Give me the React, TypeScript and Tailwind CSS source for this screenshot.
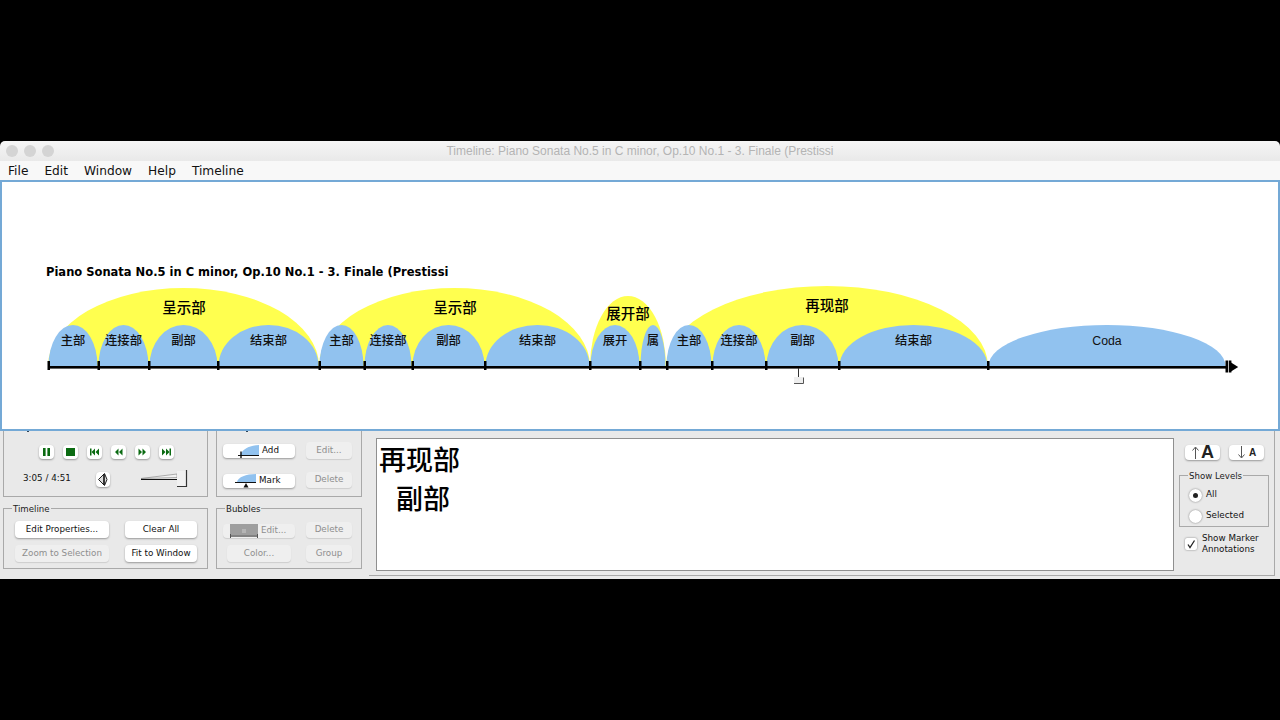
import React from "react";

const UI = "font-['DejaVu_Sans','Noto_Sans_CJK_SC',sans-serif]";
const BLUE = "#91c2ef";
const YELLOW = "#ffff4f";
const big = [
  { a: 48, b: 319, top: 288, label: "呈示部", x: 184, y: 313 },
  { a: 319, b: 590, top: 288, label: "呈示部", x: 455, y: 313 },
  { a: 590, b: 666, top: 296, label: "展开部", x: 628, y: 319 },
  { a: 666, b: 988, top: 286, label: "再现部", x: 827, y: 311 },
];
const small = [
  { a: 48, b: 98, label: "主部" },
  { a: 98, b: 149, label: "连接部" },
  { a: 149, b: 218, label: "副部" },
  { a: 218, b: 319, label: "结束部" },
  { a: 319, b: 364, label: "主部" },
  { a: 364, b: 412, label: "连接部" },
  { a: 412, b: 485, label: "副部" },
  { a: 485, b: 590, label: "结束部" },
  { a: 590, b: 640, label: "展开" },
  { a: 640, b: 666, label: "属" },
  { a: 666, b: 712, label: "主部" },
  { a: 712, b: 766, label: "连接部" },
  { a: 766, b: 839, label: "副部" },
  { a: 839, b: 988, label: "结束部" },
  { a: 988, b: 1226, label: "Coda" },
];
const ticks = [48.5, 98.5, 149, 218, 319.5, 364.5, 412.5, 485, 590, 640, 667, 712, 766, 839, 988];

function arc(a: number, b: number, top: number) {
  const rx = (b - a) / 2;
  const ry = 366 - top;
  return `M${a} 366 A${rx} ${ry} 0 0 1 ${b} 366 Z`;
}

function Diagram() {
  return (
    <svg viewBox="2 182 1276 247" className="block h-full w-full">
      <text x="46" y="276" fontSize="11.5" fontWeight="700" fontFamily="'DejaVu Sans',sans-serif" fill="#000">
        Piano Sonata No.5 in C minor, Op.10 No.1 - 3. Finale (Prestissi
      </text>
      {big.map((s, i) => (
        <path key={i} d={arc(s.a, s.b, s.top)} fill={YELLOW} />
      ))}
      {small.map((s, i) => (
        <path key={i} d={arc(s.a + 0.5, s.b - 0.5, 325)} fill={BLUE} />
      ))}
      {big.map((s, i) => (
        <text key={i} x={s.x} y={s.y} textAnchor="middle" fontSize="14.5" fontWeight="500" fontFamily="'Noto Sans CJK SC',sans-serif" fill="#000">
          {s.label}
        </text>
      ))}
      {small.map((s, i) => (
        <text
          key={i}
          x={(s.a + s.b) / 2}
          y="345"
          textAnchor="middle"
          fontSize="12.3"
          fontFamily="'Liberation Sans','Noto Sans CJK SC',sans-serif"
          fontWeight="500"
          fill="#111"
        >
          {s.label}
        </text>
      ))}
      <rect x="48" y="368" width="1180" height="1" fill="#aaa" />
      <rect x="48" y="366" width="1180" height="2.4" fill="#000" />
      {ticks.map((t) => (
        <rect key={t} x={t - 1} y="361" width="2.5" height="9" fill="#000" />
      ))}
      <rect x="1225.5" y="360.5" width="2.6" height="12" fill="#000" />
      <rect x="1228.8" y="360.5" width="2.6" height="12" fill="#000" />
      <path d="M1231 362.5 L1238.2 367 L1231 371.5 Z" fill="#000" />
      <rect x="798" y="368" width="1" height="9" fill="#333" />
      <rect x="794" y="377" width="9" height="6" fill="#eee" />
      <path d="M794 383.5 H803.5 V377.5" fill="none" stroke="#555" strokeWidth="1" />
    </svg>
  );
}

function Btn({ className = "", disabled = false, children }: { className?: string; disabled?: boolean; children?: React.ReactNode }) {
  return (
    <div
      className={`flex items-center rounded-[4px] whitespace-nowrap text-[8.75px] ${
        disabled ? "bg-[#efefef] text-[#8e8e8e] shadow-[0_1px_1px_rgba(0,0,0,0.12)]" : "bg-white text-[#111] shadow-[0_1px_2px_rgba(0,0,0,0.35)]"
      } ${className.includes("justify-start") ? "" : "justify-center"} ${className}`}
    >
      {children}
    </div>
  );
}

function Box({ legend, className = "", children }: { legend?: string; className?: string; children?: React.ReactNode }) {
  return (
    <div className={`relative border border-[#a9a9a9] ${className}`}>
      {legend && (
        <span className="absolute left-[8px] top-[-5px] bg-[#e9e9e9] px-[1px] text-[8.6px] leading-[10px] text-[#222]">{legend}</span>
      )}
      {children}
    </div>
  );
}

const G = "#0b6b12";
function Transport({ d, rects }: { d?: string; rects?: number[][] }) {
  return (
    <Btn className="h-[14px] w-[15px]">
      <svg viewBox="0 0 15 14" className="h-[14px] w-[15px]">
        {rects?.map((r, i) => <rect key={i} x={r[0]} y={r[1]} width={r[2]} height={r[3]} fill={G} />)}
        {d && <path d={d} fill={G} />}
      </svg>
    </Btn>
  );
}

function AddIcon() {
  return (
    <svg viewBox="0 0 24 14" className="h-[14px] w-[24px] shrink-0">
      <path d="M3 11 C6 5 12 1.5 22 1 V11 Z" fill={BLUE} />
      <path d="M1 11.5 H22" stroke="#111" strokeWidth="1" />
      <path d="M4 7.5 V14" stroke="#111" strokeWidth="1.4" />
    </svg>
  );
}
function MarkIcon() {
  return (
    <svg viewBox="0 0 24 16" className="h-[16px] w-[24px] shrink-0">
      <path d="M3 9 C4 4 12 1 22 1 V9 Z" fill={BLUE} />
      <path d="M1 9.5 H22" stroke="#111" strokeWidth="1" />
      <path d="M12 10 L9.5 14.5 H14.5 Z" fill="#111" />
    </svg>
  );
}

function Radio({ checked, label }: { checked?: boolean; label: string }) {
  return (
    <div className="flex h-[14px] items-center gap-[4px]">
      <div className="flex h-[13px] w-[13px] items-center justify-center rounded-full bg-white shadow-[0_0_2px_rgba(0,0,0,0.5)]">
        {checked && <div className="h-[5px] w-[5px] rounded-full bg-[#222]" />}
      </div>
      <span className="text-[8.75px] text-[#111]">{label}</span>
    </div>
  );
}

export default function App() {
  return (
    <div className={`flex h-[720px] w-[1280px] flex-col overflow-hidden bg-black pt-[141px] ${UI}`}>
      <div className="relative flex h-[20px] shrink-0 items-center justify-center rounded-t-[5px] bg-gradient-to-b from-[#f6f6f6] to-[#e9e9e9] font-['Liberation_Sans',sans-serif] text-[12px] text-[#b4b4b4]">
        <div className="absolute left-[6px] top-[4px] flex gap-[6px]">
          <div className="h-[12px] w-[12px] rounded-full bg-[#d4d4d4]" />
          <div className="h-[12px] w-[12px] rounded-full bg-[#d4d4d4]" />
          <div className="h-[12px] w-[12px] rounded-full bg-[#d4d4d4]" />
        </div>
        Timeline: Piano Sonata No.5 in C minor, Op.10 No.1 - 3. Finale (Prestissi
      </div>
      <div className="flex h-[19px] shrink-0 items-center gap-[16px] bg-[#f8f8f8] pl-[8px] pt-[1px] text-[12.2px] text-[#111]">
        <span>File</span>
        <span>Edit</span>
        <span>Window</span>
        <span>Help</span>
        <span>Timeline</span>
      </div>
      <div className="relative z-10 h-[251px] shrink-0 border-2 border-[#74a9d6] bg-white">
        <Diagram />
      </div>

      <div className="relative flex h-[148px] shrink-0 overflow-hidden bg-[#e9e9e9] pl-[3px]">
        <div className="absolute left-[27px] top-0 h-[1px] w-[2px] bg-[#345]" />
        <div className="absolute left-[246px] top-0 h-[1px] w-[2px] bg-[#345]" />
        <div className="flex w-[205px] shrink-0 flex-col">
          <Box className="mt-[-6px] h-[72px]">
            <div className="flex gap-[9px] pl-[35px] pt-[19px]">
              <Transport rects={[[4, 3, 2.6, 8], [8.4, 3, 2.6, 8]]} />
              <Transport rects={[[3, 3, 9, 8]]} />
              <Transport rects={[[3, 3.5, 1.5, 7]]} d="M8 3.5 V10.5 L4.5 7 Z M12 3.5 V10.5 L8.5 7 Z" />
              <Transport d="M7.5 3.5 V10.5 L4 7 Z M11.5 3.5 V10.5 L8 7 Z" />
              <Transport d="M3.5 3.5 V10.5 L7 7 Z M7.5 3.5 V10.5 L11 7 Z" />
              <Transport rects={[[10.5, 3.5, 1.5, 7]]} d="M3 3.5 V10.5 L6.5 7 Z M7 3.5 V10.5 L10.5 7 Z" />
            </div>
            <div className="flex items-center pl-[19px] pt-[10px]">
              <span className="w-[73px] text-[8.75px] text-[#111]">3:05 / 4:51</span>
              <Btn className="h-[15px] w-[14px]">
                <svg viewBox="0 0 14 15" className="h-[15px] w-[14px]">
                  <path d="M2.5 7.5 L8.5 1.5 L11 7.5 L8.5 13.5 Z" fill="#ddd" stroke="#222" strokeWidth="1" />
                  <path d="M8 2 V13" stroke="#111" strokeWidth="1.6" />
                </svg>
              </Btn>
              <svg viewBox="0 0 48 20" className="ml-[31px] h-[20px] w-[48px]">
                <path d="M0 9.5 L36 5 V8.5 Z" fill="#f2f2f2" stroke="#666" strokeWidth="0.5" />
                <path d="M0 10.5 H36" stroke="#111" strokeWidth="1.2" />
                <rect x="36" y="2" width="9" height="15" fill="#f1f1f1" />
                <path d="M36 17.5 H45.5 V1" fill="none" stroke="#333" strokeWidth="1.2" />
              </svg>
            </div>
          </Box>
          <Box legend="Timeline" className="mt-[11px] h-[61px]">
            <div className="grid grid-cols-[94px_72px] grid-rows-[17px_17px] gap-x-[16px] gap-y-[7px] pl-[11px] pt-[12px]">
              <Btn>Edit Properties...</Btn>
              <Btn>Clear All</Btn>
              <Btn disabled>Zoom to Selection</Btn>
              <Btn>Fit to Window</Btn>
            </div>
          </Box>
        </div>

        <div className="ml-[8px] flex w-[146px] shrink-0 flex-col">
          <Box className="mt-[-6px] h-[72px]">
            <div className="grid grid-cols-[72px_46px] grid-rows-[17px_16px] gap-x-[11px] gap-y-[13px] pl-[6px] pt-[16px]">
              <div className="flex items-start pt-[2px]">
                <Btn className="h-[14px] w-[72px] justify-start gap-[1px] pl-[14px]"><AddIcon /><span>Add</span></Btn>
              </div>
              <Btn disabled>Edit...</Btn>
              <div className="flex items-end">
                <Btn className="h-[14px] w-[72px] justify-start gap-[1px] pl-[11px]"><MarkIcon /><span>Mark</span></Btn>
              </div>
              <Btn disabled>Delete</Btn>
            </div>
          </Box>
          <Box legend="Bubbles" className="mt-[11px] h-[61px]">
            <div className="grid grid-cols-[72px_46px] grid-rows-[16px_17px] gap-x-[11px] gap-y-[7px] pl-[6px] pt-[13px]">
              <Btn disabled className="h-[14px] justify-start gap-[3px] self-end pl-[7px]">
                <svg viewBox="0 0 28 14" className="h-[14px] w-[28px] shrink-0">
                  <rect width="28" height="13" fill="#9e9e9e" />
                  <rect x="12" y="5" width="4" height="4" fill="#b5b5b5" />
                  <path d="M0 12 H28" stroke="#666" />
                  <path d="M0.5 10 V14 M27.5 10 V14" stroke="#555" />
                </svg>
                Edit...
              </Btn>
              <Btn disabled>Delete</Btn>
              <Btn disabled className="mx-[4px]">Color...</Btn>
              <Btn disabled>Group</Btn>
            </div>
          </Box>
        </div>

        <div className="ml-[7px] flex h-[145px] w-[906px] shrink-0 border-b border-r border-[#a9a9a9] pl-[7px]">
          <div className="mt-[7px] h-[133px] w-[798px] shrink-0 border border-[#8f8f8f] bg-white pl-[2px] font-['Noto_Sans_CJK_SC','Liberation_Sans',sans-serif] text-[27px] font-medium leading-[39px] text-black">
            <div>再现部</div>
            <div className="pl-[17px]">副部</div>
          </div>

          <div className="ml-[5px] flex w-[91px] shrink-0 flex-col">
            <div className="mt-[14px] flex gap-[9px] pl-[6px]">
              <Btn className="h-[15px] w-[35px] gap-[1px] font-['Liberation_Sans',sans-serif]">
                <svg viewBox="0 0 9 13" className="h-[13px] w-[9px]">
                  <path d="M4.5 13 V1.5 M1.5 4.5 L4.5 1 L7.5 4.5" fill="none" stroke="#555" strokeWidth="1" />
                </svg>
                <span className="text-[18px] font-bold leading-[15px] text-[#222]">A</span>
              </Btn>
              <Btn className="h-[15px] w-[35px] gap-[3px] font-['Liberation_Sans',sans-serif]">
                <svg viewBox="0 0 9 13" className="h-[13px] w-[9px]">
                  <path d="M4.5 0 V11.5 M1.5 8.5 L4.5 12 L7.5 8.5" fill="none" stroke="#555" strokeWidth="1" />
                </svg>
                <span className="text-[10px] font-bold leading-[15px] text-[#222]">A</span>
              </Btn>
            </div>
            <Box legend="Show Levels" className="mt-[15px] h-[52px] w-[90px]">
              <div className="flex flex-col gap-[7px] pl-[9px] pt-[12px]">
                <Radio checked label="All" />
                <Radio label="Selected" />
              </div>
            </Box>
            <div className="ml-[6px] mt-[6px] flex items-center gap-[5px]">
              <div className="flex h-[12px] w-[12px] items-center justify-center rounded-[2px] bg-white shadow-[0_0_2px_rgba(0,0,0,0.5)]">
                <svg viewBox="0 0 12 12" className="h-[12px] w-[12px]">
                  <path d="M3 6.5 L5 9.5 L9.5 2.5" fill="none" stroke="#222" strokeWidth="1.3" />
                </svg>
              </div>
              <div className="text-[8.75px] leading-[11px] text-[#111]">
                Show Marker
                <br />
                Annotations
              </div>
            </div>
          </div>
        </div>
      </div>
    </div>
  );
}
